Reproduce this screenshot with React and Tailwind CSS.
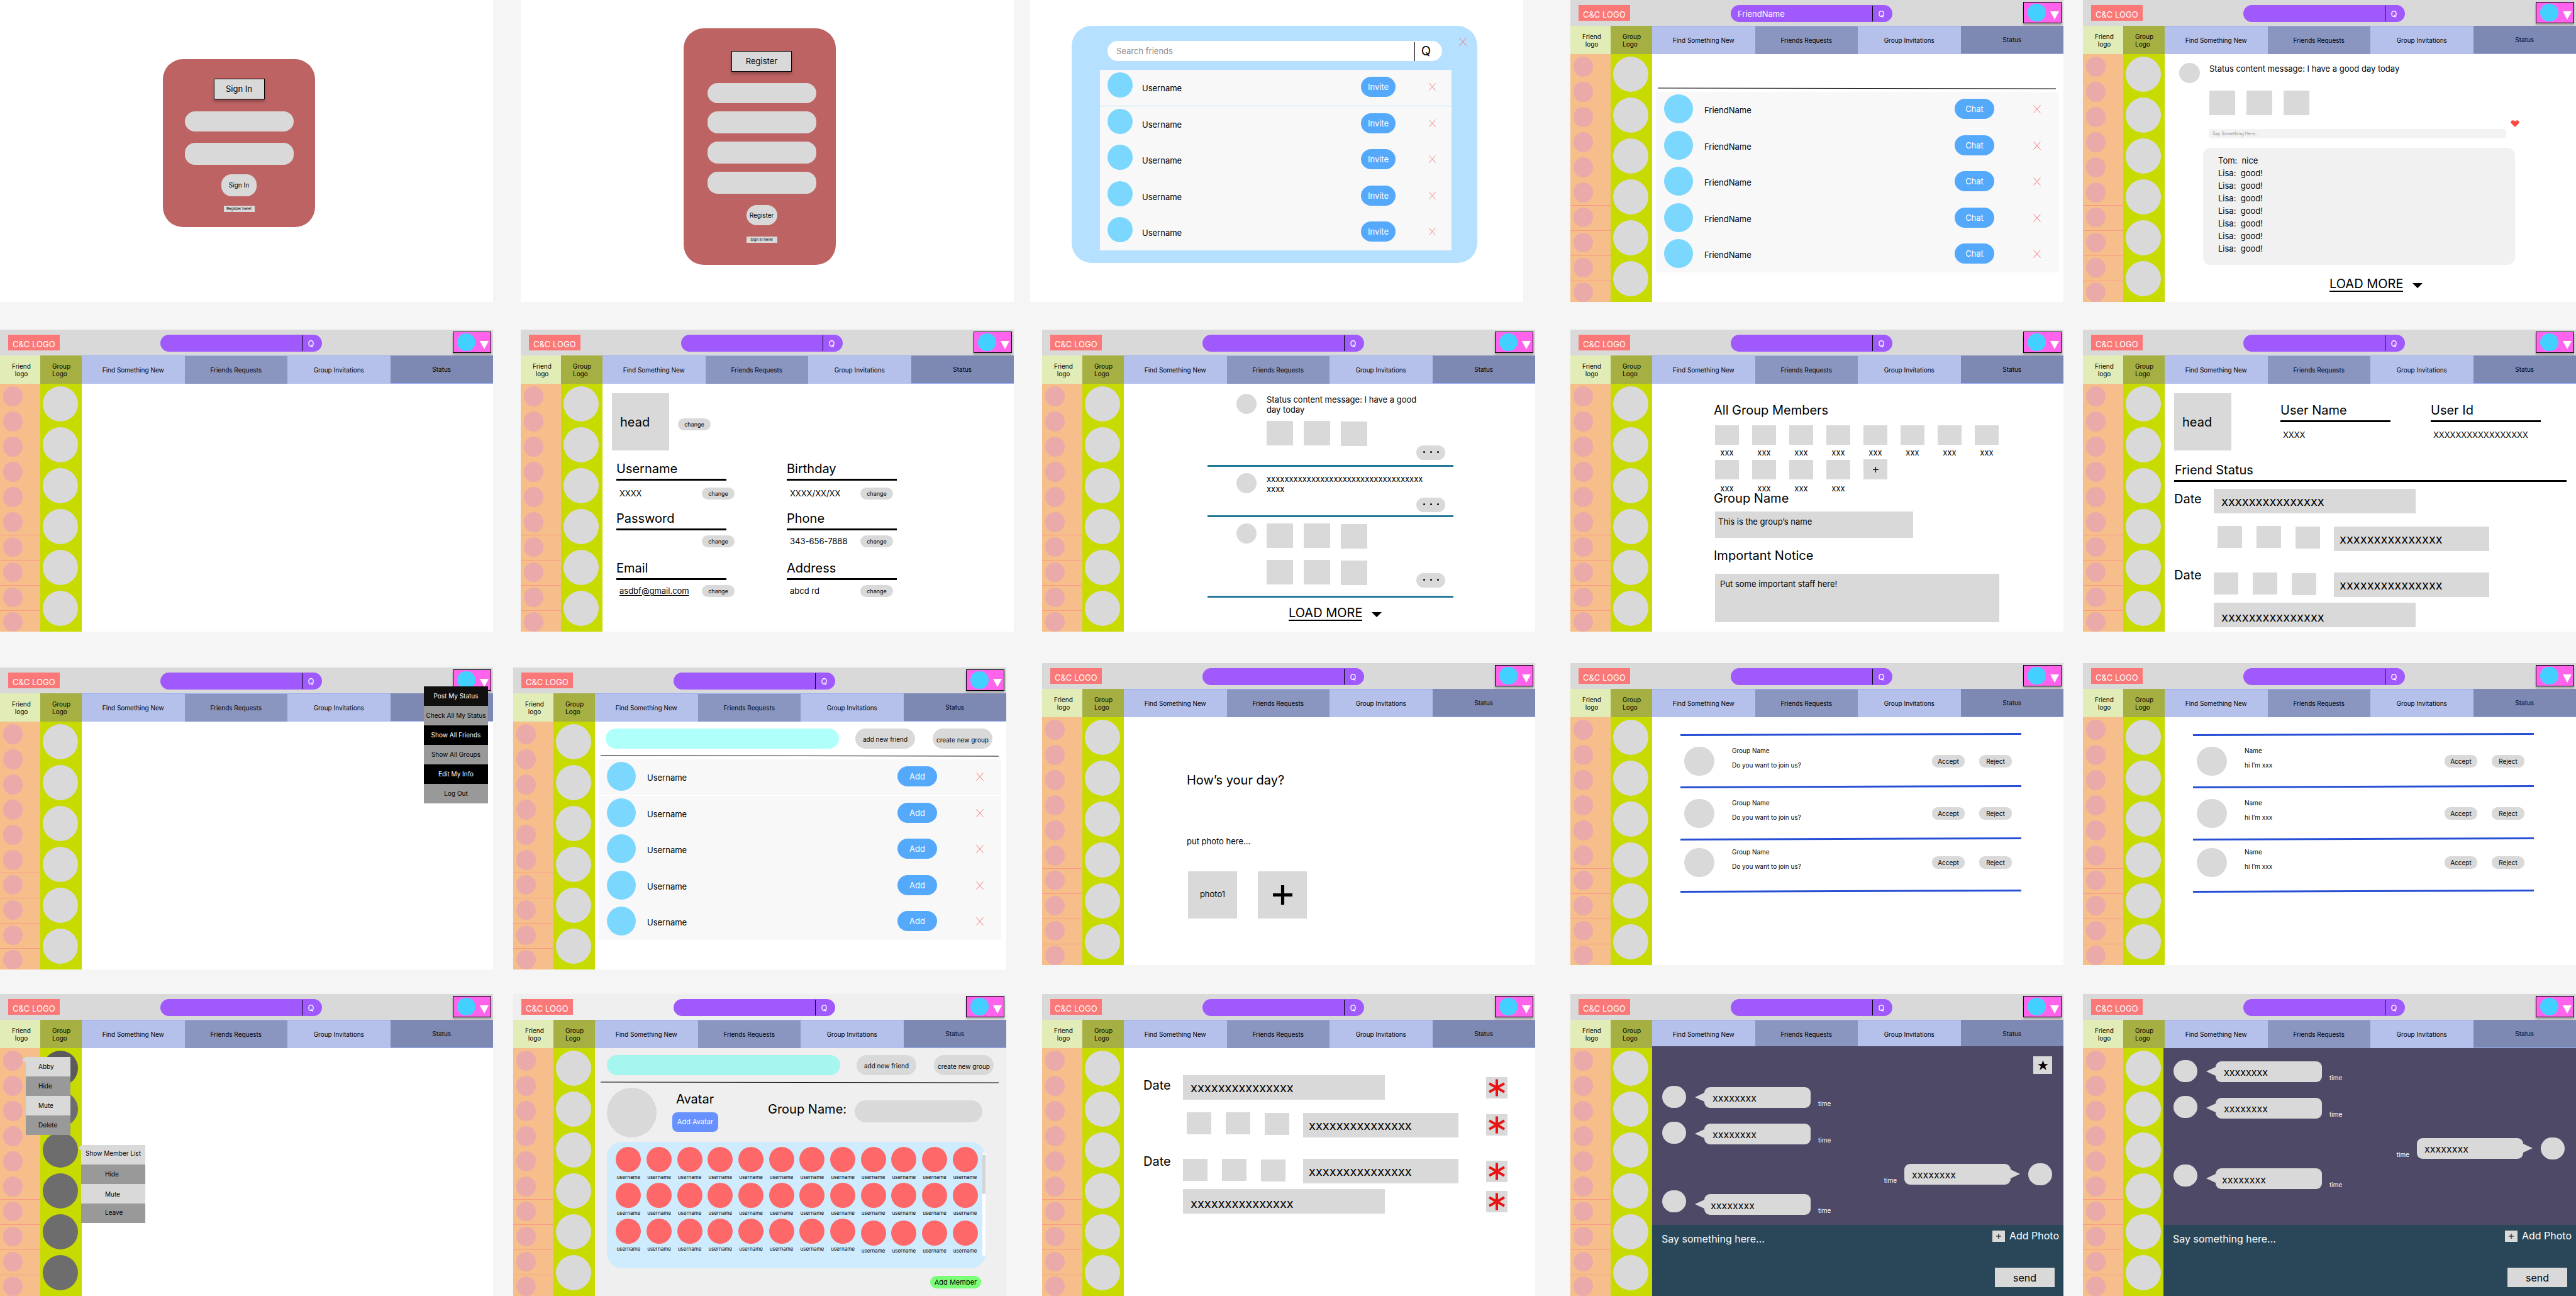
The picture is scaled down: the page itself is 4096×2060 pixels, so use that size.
import React from "react";

/* ---------- shared bits ---------- */

function Slot({ className = "", children }) {
  return <div className={"flex min-w-0 flex-1 flex-col " + className}>{children}</div>;
}

function Cross({ className = "" }) {
  return (
    <button type="button" aria-label="Remove" className={"shrink-0 " + className}>
      <svg viewBox="0 0 12 13" preserveAspectRatio="none" className="block h-full w-full">
        <path d="M0.5 0.3 L11.5 12.7 M11.5 0.3 L0.5 12.7" stroke="#fb7171" strokeWidth="1" fill="none" />
      </svg>
    </button>
  );
}

function SlantRule({ className = "", color = "#000", weight = 1, from = 1, to = 2, height = 3 }) {
  return (
    <svg viewBox={`0 0 100 ${height}`} preserveAspectRatio="none" aria-hidden="true" className={"block shrink-0 " + className}>
      <line x1="0" y1={from} x2="100" y2={to} stroke={color} strokeWidth={weight} vectorEffect="non-scaling-stroke" />
    </svg>
  );
}

function Plus({ className = "", weight = 4 }) {
  return (
    <svg viewBox="0 0 30 30" aria-hidden="true" className={"block " + className}>
      <path d="M15 0 V30 M0 15 H30" stroke="#000" strokeWidth={weight} />
    </svg>
  );
}

function Thumb({ className = "" }) {
  return <div className={"shrink-0 bg-[#d9d9d9] " + className} />;
}

function LoadMore() {
  return (
    <button type="button" className="ml-[262px] flex items-center text-[20px] leading-6">
      <span className="border-b-2 border-black leading-[22px]">LOAD MORE</span>
      <svg viewBox="0 0 16 8" aria-hidden="true" className="mt-1 ml-[15px] h-2 w-4">
        <path d="M0 0 H16 L8 8 Z" fill="#000" />
      </svg>
    </button>
  );
}

/* ---------- application shell ---------- */

const plainFriends = [1, 2, 3, 4, 5, 6];
const ruledFriends = [7, 8, 9, 10];
const groupIds = [1, 2, 3, 4, 5, 6];

function Shell({ search = "", page = "bg-white", bar = "bg-[#d9d9d9]", group = "bg-[#d9d9d9]", firstGroup = "", overlay, children }) {
  return (
    <section className={"relative flex grow flex-col " + page}>
      <header className={"flex h-[41px] items-start " + bar}>
        <a href="#home" className="mt-2 ml-[13px] h-[25px] w-[82px] bg-[#fb7878] pt-[7px] pl-[7px] text-[13px] leading-4 whitespace-nowrap text-white">
          C&amp;C LOGO
        </a>
        <form className="mt-2 ml-[160px] flex h-[27px] w-[257px] items-center overflow-hidden rounded-[14px] bg-[#9f59fd] text-[13px] leading-4 text-white">
          <input type="text" aria-label="Search" defaultValue={search} className="h-full w-[225px] bg-transparent pl-[11px] outline-none" />
          <span className="h-[25px] w-px bg-black" />
          <button type="button" className="grow pr-1 text-center">Q</button>
        </form>
        <button
          type="button"
          aria-label="Account menu"
          className="mt-[3px] mr-[3px] ml-auto flex h-[34px] w-[61px] items-start border border-black bg-[#ff63ec] pt-[2px] pl-[6px] shadow-[0_3px_3px_rgba(0,0,0,0.25)]"
        >
          <span className="h-7 w-[29px] rounded-full bg-[#42d1ff]" />
          <svg viewBox="0 0 14 13" aria-hidden="true" className="mt-3 ml-[7px] h-[13px] w-[14px]">
            <path d="M0 0 H14 L7 13 Z" fill="#fff" />
          </svg>
        </button>
      </header>

      <nav className="flex h-[45px] text-[10px] leading-3 text-black">
        <a href="#friends" className="flex w-16 items-center justify-center bg-[#e2ecb6] pl-1 text-center">
          Friend
          <br />
          logo
        </a>
        <a href="#groups" className="flex w-[66px] items-center bg-[#a6af41] pl-[19px]">
          Group
          <br />
          Logo
        </a>
        <a href="#find" className="flex flex-1 items-center justify-center border-t border-[#98acf3] bg-[#b5c0eb]">Find Something New</a>
        <a href="#requests" className="flex flex-1 items-center justify-center border-t border-[#98acf3] bg-[#8a95c0]">Friends Requests</a>
        <a href="#invitations" className="flex flex-1 items-center justify-center border-t border-[#98acf3] bg-[#b5c0eb]">Group Invitations</a>
        <a href="#status" className="flex flex-1 items-center justify-center border-b border-[#98acf3] bg-[#7e89b3]">Status</a>
      </nav>

      <div className="flex grow">
        <aside className="w-16 shrink-0 bg-[#f6be8a]">
          {plainFriends.map((id) => (
            <div key={id} className="h-10 pt-1 pl-[5px]">
              <button type="button" aria-label={"Friend " + id} className="block h-8 w-[31px] rounded-full bg-[#eaaaaa]" />
            </div>
          ))}
          {ruledFriends.map((id) => (
            <div key={id} className="h-10 border-t border-[#fb9a86] pt-[3px] pl-[5px] last:h-[34px] last:pt-[2px]">
              <button type="button" aria-label={"Friend " + id} className="block h-[31px] w-[31px] rounded-full bg-[#eaaaaa]" />
            </div>
          ))}
        </aside>
        <aside className="flex w-[66px] shrink-0 flex-col gap-[9px] bg-[#c8db00] pt-1 pl-1">
          {groupIds.map((id) => (
            <button key={id} type="button" aria-label={"Group " + id} className={"h-14 w-14 rounded-full " + (id === 1 && firstGroup ? firstGroup : group)} />
          ))}
        </aside>
        <main className="flex min-w-0 grow flex-col text-[13px] leading-4 text-black">{children}</main>
      </div>
      {overlay}
    </section>
  );
}

/* ---------- sign in / register ---------- */

function AuthCard({ className = "", title, fields, tall, action, link }) {
  return (
    <section className="grow bg-white">
      <form className={"ml-[259px] flex w-[242px] flex-col items-center rounded-[32px] bg-[#be6363] " + className}>
        <h2 className="border border-black bg-[#d9d9d9] text-center text-[13px] leading-[31px] shadow-[0_4px_4px_rgba(0,0,0,0.25)]">
          <span className={tall ? "block w-[94px]" : "block w-[79px]"}>{title}</span>
        </h2>
        <div className={"flex flex-col " + (tall ? "mt-[18px] gap-[13px]" : "mt-[19px] gap-[18px]")}>
          {fields.map((name, i) => (
            <input
              key={name}
              type={name.includes("assword") ? "password" : "text"}
              aria-label={name}
              className={"w-[173px] rounded-2xl bg-[#d9d9d9] px-4 text-[13px] outline-none " + (i === 0 ? "h-8" : "h-[35px]")}
            />
          ))}
        </div>
        <button
          type="button"
          className={"rounded-2xl bg-[#d9d9d9] text-center text-[10px] whitespace-nowrap " + (tall ? "mt-[18px] h-8 w-[49px]" : "mt-[15px] h-[35px] w-14")}
        >
          {action}
        </button>
        <a href="#switch" className={"w-[49px] bg-[#d9d9d9] text-center text-[6px] leading-[10px] whitespace-nowrap " + (tall ? "mt-[18px]" : "mt-[15px]")}>
          {link}
        </a>
      </form>
    </section>
  );
}

/* ---------- people lists ---------- */

function PeopleList({ className = "", name, action, small }) {
  return (
    <ul className={"flex h-[287px] flex-col bg-[#f8f8f8] text-[13px] leading-4 " + className}>
      {[1, 2, 3, 4, 5].map((id) => (
        <li key={id} className={"flex flex-1 items-start first:border-b " + (small ? "border-[#b5e0ff] pr-[25px] pl-3" : "border-white pr-7 pl-[13px]")}>
          <span className={"mt-1 shrink-0 rounded-full bg-[#7cd7ff] " + (small ? "mr-[15px] h-10 w-10" : "mr-[18px] h-[46px] w-[46px]")} />
          <span className="mt-[21px]">{name}</span>
          <button
            type="button"
            className={"mt-[11px] ml-auto h-8 rounded-2xl bg-[#54a9fb] text-center text-white " + (small ? "mr-[53px] w-[55px]" : "mr-[62px] w-[63px]")}
          >
            {action}
          </button>
          <Cross className={small ? "mt-[21px] h-3 w-[11px]" : "mt-[21px] h-[13px] w-3"} />
        </li>
      ))}
    </ul>
  );
}

function InviteDialog() {
  return (
    <section className="grow bg-white">
      <div className="mt-[41px] mr-[73px] ml-[66px] h-[377px] rounded-[32px] bg-[#b5e0ff] pt-6 pr-[17px] pl-[45px]">
        <div className="flex items-start">
          <form className="ml-3 flex h-8 w-[532px] items-center rounded-2xl bg-white">
            <input type="text" aria-label="Search friends" placeholder="Search friends" className="h-full w-[488px] bg-transparent pl-[14px] text-[13px] outline-none placeholder:text-[#8a8a8a]" />
            <span className="mt-[2px] h-[30px] w-px bg-black" />
            <button type="button" className="grow pr-2 text-center text-[20px] leading-6">Q</button>
          </form>
          <Cross className="-mt-[5px] ml-auto h-[13px] w-3" />
        </div>
        <PeopleList className="mt-[14px] mr-[24px]" small name="Username" action="Invite" />
      </div>
    </section>
  );
}

function AddBar({ tint }) {
  return (
    <div className="flex items-start">
      <input type="text" aria-label="Find" className={"h-8 w-[371px] rounded-2xl px-4 outline-none " + tint} />
      <button type="button" className="ml-[26px] h-8 w-[95px] rounded-2xl bg-[#d9d9d9] pt-[2px] text-center text-[10px] whitespace-nowrap">add new friend</button>
      <button type="button" className="ml-[28px] h-8 w-[95px] rounded-2xl bg-[#d9d9d9] pt-1 text-center text-[10px] whitespace-nowrap">create new group</button>
    </div>
  );
}

function FriendsScreen() {
  return (
    <Shell search="FriendName">
      <SlantRule className="mt-[53px] mr-3 ml-[9px] h-[3px]" />
      <PeopleList className="mt-1 mr-2 ml-[6px]" name="FriendName" action="Chat" />
    </Shell>
  );
}

function FindScreen() {
  return (
    <Shell>
      <div className="mt-[11px] ml-[17px]">
        <AddBar tint="bg-[#affffa]" />
      </div>
      <SlantRule className="mt-[10px] mr-3 ml-[9px] h-[3px]" />
      <PeopleList className="mt-1 mr-2 ml-[6px]" name="Username" action="Add" />
    </Shell>
  );
}

/* ---------- single status with comments ---------- */

function StatusScreen() {
  const comments = ["Tom:  nice", "Lisa:  good!", "Lisa:  good!", "Lisa:  good!", "Lisa:  good!", "Lisa:  good!", "Lisa:  good!", "Lisa:  good!"];
  return (
    <Shell>
      <article className="mt-[14px] ml-[23px] flex items-start">
        <span className="h-8 w-[33px] shrink-0 rounded-full bg-[#d9d9d9]" />
        <div className="ml-[15px]">
          <p className="mt-[1px]">Status content message: I have a good day today</p>
          <div className="mt-[27px] flex gap-[18px]">
            <Thumb className="h-[39px] w-[41px]" />
            <Thumb className="h-[39px] w-[41px]" />
            <Thumb className="h-[39px] w-[41px]" />
          </div>
        </div>
      </article>
      <button type="button" aria-label="Like" className="mt-2 ml-[550px] h-[11px] w-[14px]">
        <svg viewBox="0 0 14 11" className="block h-full w-full">
          <path d="M7 11 L1 5 C-0.6 3.2 0.4 0.2 3.4 0.2 C5.2 0.2 6.3 1 7 2 C7.7 1 8.8 0.2 10.6 0.2 C13.6 0.2 14.6 3.2 13 5 Z" fill="#ff4b42" />
        </svg>
      </button>
      <input type="text" aria-label="Comment" placeholder="Say Something Here..." className="mt-[3px] ml-[70px] h-[15px] w-[473px] rounded-[4px] bg-[#f3f3f3] pl-[6px] text-[7px] outline-none placeholder:text-[#8f8f8f]" />
      <ul className="mt-[15px] ml-[61px] h-[186px] w-[496px] rounded-[12px] bg-[#f1f1f1] pt-[10px] pl-6">
        {comments.map((c, i) => (
          <li key={i} className="h-5 leading-5 whitespace-pre">{c}</li>
        ))}
      </ul>
      <div className="mt-[19px]">
        <LoadMore />
      </div>
    </Shell>
  );
}

/* ---------- profile ---------- */

function ChangeButton({ className = "" }) {
  return (
    <button type="button" className={"h-[19px] w-[52px] shrink-0 rounded-[10px] bg-[#d9d9d9] text-center text-[9px] leading-[19px] " + className}>
      change
    </button>
  );
}

function Field({ label, children, gap = "pt-[8px]", width = "w-[188px]" }) {
  return (
    <div className={width}>
      <h3 className="text-[20px] leading-6">{label}</h3>
      <div className="mt-1 h-[3px] w-[175px] bg-black" />
      <div className={"flex h-[39px] items-start justify-between pl-[5px] " + gap}>
        <span className="leading-[18px]">{children}</span>
        <ChangeButton />
      </div>
    </div>
  );
}

function ProfileScreen() {
  return (
    <Shell>
      <div className="mt-[15px] ml-[15px] flex items-start">
        <div className="flex h-[91px] w-[91px] items-center bg-[#d9d9d9] pl-[13px] text-[20px]">head</div>
        <ChangeButton className="mt-10 ml-[14px]" />
      </div>
      <div className="mt-[17px] ml-[22px] grid grid-cols-[271px_1fr] gap-y-[9px]">
        <Field label="Username" gap="pt-[11px]">XXXX</Field>
        <Field label="Birthday" gap="pt-[11px]" width="w-[169px]">XXXX/XX/XX</Field>
        <Field label="Password" />
        <Field label="Phone" width="w-[169px]">343-656-7888</Field>
        <Field label="Email">
          <a href="mailto:asdbf@gmail.com" className="underline underline-offset-2">asdbf@gmail.com</a>
        </Field>
        <Field label="Address" width="w-[169px]">abcd rd</Field>
      </div>
    </Shell>
  );
}

/* ---------- status feed ---------- */

function FeedThumbs({ className = "" }) {
  return (
    <div className={"flex gap-[17px] " + className}>
      <Thumb className="h-[39px] w-[42px]" />
      <Thumb className="h-[39px] w-[42px]" />
      <Thumb className="mt-px h-[39px] w-[42px]" />
    </div>
  );
}

function Post({ pad, more, end, children }) {
  return (
    <article className={"w-[391px] border-b-3 border-[#237897] " + pad + " " + end}>
      <div className="flex items-start pl-[46px]">
        <span className="h-8 w-8 shrink-0 rounded-full bg-[#d9d9d9]" />
        <div className="ml-4 w-[252px]">{children}</div>
      </div>
      <button type="button" aria-label="More" className={"relative ml-[332px] flex h-[23px] w-[46px] items-center justify-center gap-2 rounded-[12px] bg-[#d9d9d9] pb-[2px] " + more}>
        <span className="h-[3px] w-[3px] rounded-full bg-black" />
        <span className="h-[3px] w-[3px] rounded-full bg-black" />
        <span className="h-[3px] w-[3px] rounded-full bg-black" />
      </button>
    </article>
  );
}

function FeedScreen() {
  return (
    <Shell>
      <div className="ml-[133px]">
        <Post pad="pt-4" more="-mt-px" end="pb-[8px]">
          <p className="pt-px">Status content message: I have a good day today</p>
          <FeedThumbs className="mt-[10px]" />
        </Post>
        <Post pad="pt-[10px]" more="mt-[6px]" end="pb-[5px]">
          <p className="pt-px break-all">xxxxxxxxxxxxxxxxxxxxxxxxxxxxxxxxxxxxxxx</p>
        </Post>
        <Post pad="pt-[10px]" more="-mt-[19px]" end="pb-[13px]">
          <FeedThumbs />
          <FeedThumbs className="mt-[18px]" />
        </Post>
      </div>
      <div className="mt-[13px]">
        <LoadMore />
      </div>
    </Shell>
  );
}

/* ---------- group info ---------- */

function Member({ gap = "mt-1" }) {
  return (
    <li className="w-[38px]">
      <Thumb className="h-[31px]" />
      <p className={"text-center " + gap}>xxx</p>
    </li>
  );
}

function GroupInfoScreen() {
  return (
    <Shell>
      <div className="mt-[30px] ml-[98px]">
        <h3 className="text-[20px] leading-6">All Group Members</h3>
        <ul className="mt-3 ml-[2px] flex gap-[21px]">
          {[1, 2, 3, 4, 5, 6, 7, 8].map((i) => (
            <Member key={i} />
          ))}
        </ul>
        <ul className="mt-1 ml-[2px] flex gap-[21px]">
          {[1, 2, 3, 4].map((i) => (
            <Member key={i} gap="mt-[6px]" />
          ))}
          <li>
            <button type="button" aria-label="Add member" className="-mt-px flex h-8 w-[38px] items-center justify-center bg-[#d9d9d9]">
              <Plus className="h-[9px] w-[9px]" />
            </button>
          </li>
        </ul>
        <label htmlFor="group-name" className="-mt-1 block text-[20px] leading-6">Group Name</label>
        <input id="group-name" type="text" defaultValue="This is the group’s name" className="mt-[9px] ml-[2px] block h-[42px] w-[315px] bg-[#d9d9d9] pb-[10px] pl-[5px] outline-none" />
        <label htmlFor="group-notice" className="mt-4 block text-[20px] leading-6">Important Notice</label>
        <textarea id="group-notice" defaultValue="Put some important staff here!" className="mt-[17px] ml-[2px] block h-[77px] w-[452px] resize-none bg-[#d9d9d9] pt-2 pl-2 outline-none" />
      </div>
    </Shell>
  );
}

/* ---------- dated statuses ---------- */

function Star() {
  return (
    <button type="button" aria-label="Delete status" className="mr-[2px] ml-auto flex h-[34px] w-[34px] items-center justify-center self-center bg-[#d9d9d9]">
      <svg viewBox="0 0 28 28" className="h-7 w-7">
        <path d="M14 0.5 V27.5 M2 7.2 L26 20.8 M26 7.2 L2 20.8" stroke="#e91313" strokeWidth="4" />
      </svg>
    </button>
  );
}

function Note({ className = "", text = "pt-0" }) {
  return <div className={"flex h-[39px] shrink-0 items-center bg-[#d9d9d9] text-[20px] " + className + " " + text}>xxxxxxxxxxxxxxx</div>;
}

function NoteThumbs({ className = "" }) {
  return (
    <div className={"flex shrink-0 gap-[23px] " + className}>
      <Thumb className="h-[35px] w-[39px]" />
      <Thumb className="h-[35px] w-[39px]" />
      <Thumb className="mt-px h-[35px] w-[39px]" />
    </div>
  );
}

function DatedNotes({ stars }) {
  return (
    <div className="w-[581px]">
      <div className="flex items-start">
        <h4 className="mt-1 w-[63px] shrink-0 text-[20px] leading-6">Date</h4>
        <Note className="w-[321px] pl-3" />
        {stars && <Star />}
      </div>
      <div className="mt-5 flex items-start pl-[69px]">
        <NoteThumbs />
        <Note className="mt-[1px] ml-[22px] w-[247px] pl-[9px]" />
        {stars && <Star />}
      </div>
      <div className="mt-[34px] flex items-start">
        <h4 className="-mt-2 w-[63px] shrink-0 text-[20px] leading-6">Date</h4>
        <NoteThumbs />
        <Note className="ml-[28px] w-[247px] pl-[9px]" />
        {stars && <Star />}
      </div>
      <div className="mt-[9px] flex items-start pl-[63px]">
        <Note className="w-[321px] pl-3" text="pt-[6px]" />
        {stars && <Star />}
      </div>
    </div>
  );
}

function InfoColumn({ label, value }) {
  return (
    <div className="w-[175px]">
      <h3 className="text-[20px] leading-6">{label}</h3>
      <div className="mt-1 h-[3px] bg-black" />
      <p className="mt-3 pl-[4px]">{value}</p>
    </div>
  );
}

function FriendStatusScreen() {
  return (
    <Shell>
      <div className="mt-[15px] ml-[15px] flex items-start">
        <div className="flex h-[91px] w-[91px] items-center bg-[#d9d9d9] pl-[13px] text-[20px]">head</div>
        <div className="mt-[15px] ml-[78px] flex gap-16">
          <InfoColumn label="User Name" value="XXXX" />
          <InfoColumn label="User Id" value="XXXXXXXXXXXXXXXXX" />
        </div>
      </div>
      <h3 className="mt-[19px] ml-4 text-[20px] leading-6">Friend Status</h3>
      <div className="mt-1 mr-[15px] ml-[15px] h-[3px] bg-black" />
      <div className="mt-[11px] ml-[15px]">
        <DatedNotes />
      </div>
    </Shell>
  );
}

function MyStatusScreen() {
  return (
    <Shell>
      <div className="mt-[43px] ml-[31px]">
        <DatedNotes stars />
      </div>
    </Shell>
  );
}

/* ---------- pop-up menus ---------- */

function Menu({ className = "", items }) {
  return (
    <ul className={"absolute text-[10px] whitespace-nowrap text-black " + className}>
      {items.map(([label, tone], i) => (
        <li key={i}>
          <button type="button" className={"flex h-[31px] w-full items-center " + tone}>{label}</button>
        </li>
      ))}
    </ul>
  );
}

function Pointer({ className = "" }) {
  return (
    <svg viewBox="0 0 6 9" aria-hidden="true" className={"absolute h-[9px] w-[6px] " + className}>
      <path d="M6 0 V9 L0 4.5 Z" fill="#d9d9d9" />
    </svg>
  );
}

function AccountMenuScreen() {
  return (
    <Shell
      overlay={
        <Menu
          className="top-[30px] right-[8px] w-[102px]"
          items={[
            ["Post My Status", "justify-center bg-[#120f0f] text-white"],
            ["Check All My Status", "justify-center bg-[#999999]"],
            ["Show All Friends", "justify-center bg-black text-white"],
            ["Show All Groups", "justify-center bg-[#999999]"],
            ["Edit My Info", "justify-center bg-black text-white"],
            ["Log Out", "justify-center bg-[#999999]"],
          ]}
        />
      }
    />
  );
}

function ContextMenuScreen() {
  return (
    <Shell
      group="bg-[#6d6d6d]"
      firstGroup="bg-[#5b5b5b]"
      overlay={
        <>
          <Pointer className="top-[100px] left-[35px]" />
          <Menu
            className="top-[100px] left-[41px] w-[71px]"
            items={[
              ["Abby", "bg-[#d9d9d9] pl-5"],
              ["Hide", "bg-[#999999] pl-5"],
              ["Mute", "bg-[#d9d9d9] pl-5"],
              ["Delete", "bg-[#999999] pl-5"],
            ]}
          />
          <Pointer className="top-[240px] left-[124px]" />
          <Menu
            className="top-[240px] left-[129px] w-[102px]"
            items={[
              ["Show Member List", "bg-[#d9d9d9] pb-1 pl-[7px]"],
              ["Hide", "bg-[#999999] pl-[38px]"],
              ["Mute", "bg-[#d9d9d9] pt-[2px] pl-[38px]"],
              ["Leave", "bg-[#999999] pb-[2px] pl-[38px]"],
            ]}
          />
        </>
      }
    />
  );
}

/* ---------- compose status ---------- */

function ComposeScreen() {
  return (
    <Shell>
      <div className="mt-[88px] ml-[100px]">
        <h3 className="text-[20px] leading-6">How’s your day?</h3>
        <p className="mt-[77px]">put photo here...</p>
        <div className="mt-10 ml-[2px] flex gap-[33px]">
          <div className="flex h-[75px] w-[78px] items-center justify-center bg-[#d9d9d9] pb-1">photo1</div>
          <button type="button" aria-label="Add photo" className="flex h-[75px] w-[78px] items-center justify-center bg-[#d9d9d9]">
            <Plus className="h-[31px] w-[31px]" weight={5} />
          </button>
        </div>
      </div>
    </Shell>
  );
}

/* ---------- requests and invitations ---------- */

function RequestRule({ className = "" }) {
  return <SlantRule className={"h-[5px] w-full " + className} color="#274fd5" weight={3} from={3.5} to={1.5} height={5} />;
}

function Request({ title, text, className = "" }) {
  return (
    <div className={"flex items-start pl-[6px] text-[10px] " + className}>
      <span className="h-[46px] w-12 shrink-0 rounded-full bg-[#d9d9d9]" />
      <div className="ml-7 grow leading-3">
        <h4>{title}</h4>
        <p className="mt-[11px]">{text}</p>
      </div>
      <button type="button" className="mt-[13px] h-5 w-[52px] rounded-[9px] bg-[#d9d9d9] text-center">Accept</button>
      <button type="button" className="mt-[13px] mr-[15px] ml-[23px] h-5 w-[52px] rounded-[9px] bg-[#d9d9d9] text-center">Reject</button>
    </div>
  );
}

function RequestsScreen({ title, text }) {
  return (
    <Shell>
      <div className="mt-[25px] ml-[45px] w-[542px]">
        <RequestRule />
        <Request className="mt-[17px]" title={title} text={text} />
        <RequestRule className="mt-[15px]" />
        <Request className="mt-[17px]" title={title} text={text} />
        <RequestRule className="mt-[15px]" />
        <Request className="mt-[12px]" title={title} text={text} />
        <RequestRule className="mt-[20px]" />
      </div>
    </Shell>
  );
}

/* ---------- create group ---------- */

const candidates = Array.from({ length: 36 }, (_, i) => i);

function CreateGroupScreen() {
  return (
    <Shell page="bg-[#efefef]" bar="bg-[#efefef]">
      <div className="mt-[11px] ml-[19px]">
        <AddBar tint="bg-[#a6f5ef]" />
      </div>
      <SlantRule className="mt-[10px] mr-3 ml-[9px] h-[3px]" />
      <div className="mt-[7px] ml-[19px] flex items-start">
        <span className="h-[79px] w-[79px] shrink-0 rounded-full bg-[#d9d9d9]" />
        <div className="mt-[6px] ml-[25px]">
          <h3 className="pl-[6px] text-[20px] leading-6">Avatar</h3>
          <button type="button" className="mt-[9px] h-[31px] w-[73px] rounded-[8px] bg-[#6691ff] pb-[2px] text-center text-[11px] text-white">Add Avatar</button>
        </div>
        <label htmlFor="new-group" className="mt-[22px] ml-[79px] w-[138px] shrink-0 text-[20px] leading-6">Group Name:</label>
        <input id="new-group" type="text" className="mt-5 h-[35px] w-[203px] rounded-[18px] bg-[#d9d9d9] px-4 outline-none" />
      </div>
      <div className="relative mt-[7px] ml-[19px] h-[201px] w-[602px] rounded-[24px] bg-[#cfecfe]">
        <ul className="grid grid-cols-12 gap-y-[7px] pt-2 pr-2 pl-[10px]">
          {candidates.map((i) => (
            <li key={i} className={"flex flex-col items-center " + (i > 31 ? "mt-[3px]" : "")}>
              <button type="button" aria-label={"Pick member " + (i + 1)} className="h-10 w-10 rounded-full bg-[#ff6868]" />
              <span className="mt-1 h-[6px] text-[8px] leading-[8px]">username</span>
            </li>
          ))}
        </ul>
        <div className="absolute top-[17px] right-0 h-[164px] w-[5px] rounded-full bg-white">
          <div className="mt-[3px] h-[63px] rounded-full bg-[#d5d5d5]" />
        </div>
      </div>
      <button type="button" className="mt-[12px] mr-10 ml-auto h-5 w-[81px] rounded-[10px] bg-[#7bff78] text-center text-[11px]">Add Member</button>
    </Shell>
  );
}

/* ---------- chat ---------- */

function Bubble({ right, text = "pl-[13px]" }) {
  const tail = (
    <svg viewBox="0 0 15 14" aria-hidden="true" className="mt-[9px] h-[14px] w-[15px] shrink-0">
      <path d={right ? "M0 0 V14 L15 7 Z" : "M15 0 V14 L0 7 Z"} fill="#d9d9d9" />
    </svg>
  );
  return (
    <div className="flex items-start">
      {!right && tail}
      <p className={"flex h-[33px] w-[169px] items-center rounded-[9px] bg-[#d9d9d9] text-[16px] " + text}>xxxxxxxx</p>
      {right && tail}
    </div>
  );
}

function Message({ right, className = "", drop = "mt-[2px]", text }) {
  return (
    <div className={"flex items-start " + (right ? "flex-row-reverse pr-[18px] " : "pl-4 ") + className}>
      <span className="h-[35px] w-[38px] shrink-0 rounded-full bg-[#d9d9d9]" />
      <div className={"flex items-end gap-3 " + (right ? "mr-[13px] flex-row-reverse " : "ml-[14px] ") + drop}>
        <Bubble right={right} text={text} />
        <time className="text-[10px] leading-[14px] text-white">time</time>
      </div>
    </div>
  );
}

function ChatScreen({ pinned }) {
  return (
    <Shell>
      <div className={"relative flex grow flex-col " + (pinned ? "-mt-[3px]" : "-ml-[2px]")}>
        <div className={"bg-[#4d4967] " + (pinned ? "h-[284px]" : "h-[281px] pt-[19px]")}>
          {pinned && (
            <button type="button" aria-label="Pin chat" className="mt-4 mr-[18px] ml-auto flex h-7 w-[30px] items-center justify-center bg-[#d9d9d9]">
              <svg viewBox="0 0 24 24" className="h-[19px] w-[19px]">
                <path d="M12 1.5 L14.7 9 H22.6 L16.3 13.7 L18.6 21.3 L12 16.7 L5.4 21.3 L7.7 13.7 L1.4 9 H9.3 Z" fill="#0d0303" />
              </svg>
            </button>
          )}
          <Message className={pinned ? "mt-[19px]" : ""} />
          <Message className="mt-[22px]" drop="mt-[3px]" />
          <Message className="mt-[30px]" right drop="mt-[1px]" text="pl-3" />
          <Message className="mt-[8px]" drop="mt-[6px]" text="pt-[3px] pl-[10px]" />
        </div>
        <form className="flex grow items-start justify-between bg-[#2a4759] pr-[7px] pl-[15px] text-[16px] leading-5 text-white">
          <input type="text" aria-label="Message" placeholder="Say something here..." className="mt-[12px] w-[300px] bg-transparent outline-none placeholder:text-white" />
          <div className="flex flex-col items-end">
            <button type="button" className="mt-[7px] flex items-center gap-[7px]">
              <span className="mt-[2px] flex h-[18px] w-5 items-center justify-center bg-[#d9d9d9]">
                <Plus className="h-2 w-2" />
              </span>
              Add Photo
            </button>
            <button type="button" className="mt-[41px] mr-[7px] h-[31px] w-[95px] bg-[#d9d9d9] text-center text-black">send</button>
          </div>
        </form>
      </div>
    </Shell>
  );
}

/* ---------- board ---------- */

export default function App() {
  return (
    <div className="flex w-full flex-col bg-[#f5f5f5] font-['Inter',sans-serif] text-black">
      <div className="flex min-h-[480px]">
        <Slot className="mr-11">
          <AuthCard className="mt-[94px] pt-[31px] pb-6" title="Sign In" fields={["Username", "Password"]} action="Sign In" link="Register here!" />
        </Slot>
        <Slot className="mr-[26px]">
          <AuthCard
            className="mt-[45px] pt-9 pb-[35px] pl-[6px]"
            tall
            title="Register"
            fields={["Username", "Email", "Password", "Confirm password"]}
            action="Register"
            link="Sign In here!"
          />
        </Slot>
        <Slot className="mr-[75px]">
          <InviteDialog />
        </Slot>
        <Slot className="mr-[31px]">
          <FriendsScreen />
        </Slot>
        <Slot>
          <StatusScreen />
        </Slot>
      </div>

      <div className="mt-11 flex">
        <Slot className="mr-11">
          <Shell />
        </Slot>
        <Slot className="mr-[45px]">
          <ProfileScreen />
        </Slot>
        <Slot className="mr-14">
          <FeedScreen />
        </Slot>
        <Slot className="mr-[31px]">
          <GroupInfoScreen />
        </Slot>
        <Slot>
          <FriendStatusScreen />
        </Slot>
      </div>

      <div className="mt-[50px] flex items-start">
        <Slot className="mt-[7px] mr-8">
          <AccountMenuScreen />
        </Slot>
        <Slot className="mt-[7px] mr-[57px]">
          <FindScreen />
        </Slot>
        <Slot className="mr-14">
          <ComposeScreen />
        </Slot>
        <Slot className="mr-[31px]">
          <RequestsScreen title="Group Name" text="Do you want to join us?" />
        </Slot>
        <Slot>
          <RequestsScreen title="Name" text="hi I’m xxx" />
        </Slot>
      </div>

      <div className="mt-[39px] flex">
        <Slot className="mr-8">
          <ContextMenuScreen />
        </Slot>
        <Slot className="mr-[57px]">
          <CreateGroupScreen />
        </Slot>
        <Slot className="mr-14">
          <MyStatusScreen />
        </Slot>
        <Slot className="mr-[31px]">
          <ChatScreen pinned />
        </Slot>
        <Slot>
          <ChatScreen />
        </Slot>
      </div>
    </div>
  );
}
